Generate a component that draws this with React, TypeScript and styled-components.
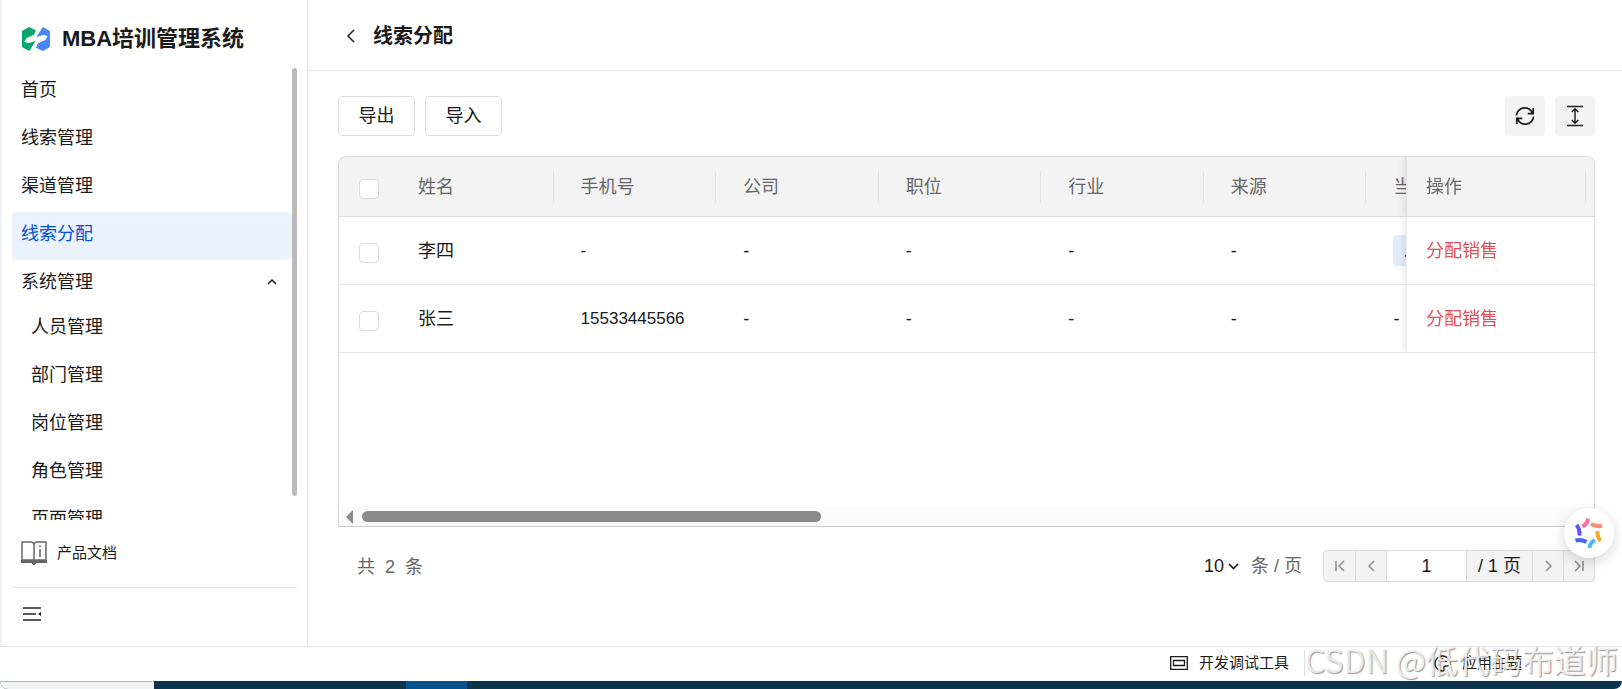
import React from "react";
import styled, { createGlobalStyle } from "styled-components";

const GlobalStyle = createGlobalStyle`
  *, *::before, *::after { box-sizing: border-box; }
  body {
    margin: 0;
    background: #fff;
    color: #1a1a1a;
    font-family: "Liberation Sans", "Noto Sans CJK SC", sans-serif;
    font-size: 18px;
    line-height: 26px;
  }
  button, input, select { font: inherit; color: inherit; }
  a { color: inherit; text-decoration: none; }
`;

const Page = styled.div`
  display: flex;
  flex-direction: column;
  height: 100vh;
  min-height: 560px;
  overflow: hidden;
`;

const Workspace = styled.div`
  flex: 1;
  min-height: 0;
  display: flex;
  border-left: 2px solid #f0f0f8;
`;

const Sidebar = styled.aside`
  flex: none;
  width: 306px;
  padding: 0 10px;
  display: flex;
  flex-direction: column;
  border-right: 1px solid #e3e3e6;
`;

const Brand = styled.div`
  flex: none;
  height: 68px;
  padding: 10px 10px 0;
  display: flex;
  align-items: center;
  gap: 12px;
`;

const BrandName = styled.h1`
  margin: 0;
  font-size: 22px;
  line-height: 32px;
  font-weight: 700;
  white-space: nowrap;
`;

const MenuScroll = styled.div`
  flex: 1;
  min-height: 0;
  display: flex;
  align-items: flex-start;
  overflow: hidden;
`;

const Menu = styled.nav`
  flex: 1;
  min-width: 0;
`;

const MenuLink = styled.a<{ $active?: boolean; $nested?: boolean }>`
  display: block;
  height: 48px;
  padding: 9px 10px 13px ${(p) => (p.$nested ? "19px" : "9px")};
  border-radius: 4px;
  background: ${(p) => (p.$active ? "#ebf2ff" : "transparent")};
  color: ${(p) => (p.$active ? "#0052d9" : "#1a1a1a")};
`;

const GroupButton = styled.button`
  display: flex;
  align-items: center;
  justify-content: space-between;
  width: 100%;
  height: 45px;
  padding: 0 15px 2px 9px;
  border: 0;
  background: none;
`;

const MenuThumb = styled.div`
  flex: none;
  width: 5px;
  height: 428px;
  border-radius: 3px;
  background: #bbb;
`;

const DocsLink = styled.a`
  flex: none;
  display: flex;
  align-items: center;
  gap: 10px;
  height: 68px;
  padding: 0 0 2px 9px;
  font-size: 15px;
  border-bottom: 1px solid #e5e5e5;
`;

const CollapseButton = styled.button`
  flex: none;
  display: flex;
  align-items: center;
  height: 58px;
  padding: 0 10px 6px 11px;
  border: 0;
  background: none;
`;

const Main = styled.main`
  flex: 1;
  min-width: 0;
  display: flex;
  flex-direction: column;
`;

const TopBar = styled.header`
  flex: none;
  display: flex;
  align-items: center;
  gap: 18px;
  height: 71px;
  padding: 2px 0 0 38px;
  border-bottom: 1px solid #e5e5e5;
`;

const BackButton = styled.button`
  display: flex;
  padding: 0;
  border: 0;
  background: none;
`;

const PageTitle = styled.h2`
  margin: 0;
  font-size: 20px;
  line-height: 28px;
  font-weight: 700;
`;

const Content = styled.section`
  flex: 1;
  min-height: 0;
  display: flex;
  flex-direction: column;
  padding: 25px 27px 41px 30px;
`;

const Toolbar = styled.div`
  display: flex;
  gap: 10px;
  height: 40px;
  margin-bottom: 20px;
`;

const OutlineButton = styled.button`
  width: 77px;
  height: 40px;
  padding: 0;
  border: 1px solid #ddd;
  border-radius: 4px;
  background: #fff;
`;

const Spacer = styled.div`
  flex: 1;
`;

const IconButton = styled.button`
  display: flex;
  align-items: center;
  justify-content: center;
  width: 40px;
  height: 40px;
  padding: 0;
  border: 0;
  border-radius: 4px;
  background: #f3f3f3;
`;

const TableFrame = styled.div`
  flex: 1;
  min-height: 0;
  display: flex;
  flex-direction: column;
  border: 1px solid #dcdcdc;
  border-bottom-color: #ccc;
  border-radius: 8px 8px 0 0;
  overflow: hidden;
`;

const TableViewport = styled.div`
  flex: 1;
  min-height: 0;
  overflow: hidden;
`;

const Table = styled.table`
  table-layout: fixed;
  width: 1386px;
  min-width: 100%;
  border-collapse: separate;
  border-spacing: 0;
`;

const CheckCol = styled.col`
  width: 60px;
`;

const ActionCol = styled.col`
  width: 188px;
`;

const HeadCell = styled.th`
  height: 60px;
  padding: 0 8px 0 19px;
  background: #f3f3f3;
  border-bottom: 1px solid #dcdcdc;
  color: #666;
  font-weight: 400;
  text-align: left;
`;

const HeadLabel = styled.div`
  height: 32px;
  line-height: 32px;
  border-right: 1px solid #e4e4e4;
  white-space: nowrap;
`;

const Cell = styled.td`
  height: 68px;
  padding: 0 8px 0 19px;
  background: #fff;
  border-bottom: 1px solid #e7e7e7;
  white-space: nowrap;
`;

const pinned = `
  position: sticky;
  right: 0;
  border-left: 1px solid #eee;
  box-shadow: -3px 0 6px rgba(0, 0, 0, 0.08);
  clip-path: inset(0 0 0 -10px);
`;

const PinnedHead = styled(HeadCell)`
  ${pinned}
  border-left-color: #e2e2e2;
`;

const PinnedCell = styled(Cell)`
  ${pinned}
`;

const Phone = styled.span`
  font-size: 17px;
`;

const Checkbox = styled.input`
  appearance: none;
  display: block;
  width: 20px;
  height: 20px;
  margin: 4px 0 0 1px;
  border: 1px solid #dcdcdc;
  border-radius: 4px;
  background: #fff;
`;

const OwnerTag = styled.span`
  display: inline-block;
  height: 31px;
  padding: 0 10px;
  border-radius: 4px;
  background: #e3ecfb;
  color: #4b3fd0;
  line-height: 30px;
  vertical-align: middle;
`;

const ActionButton = styled.button`
  padding: 0;
  border: 0;
  background: none;
  color: #e34d59;
`;

const ScrollTrack = styled.div`
  flex: none;
  display: flex;
  align-items: center;
  height: 19px;
  padding: 0 7px;
  background: #fbfbfb;
`;

const ScrollThumb = styled.div`
  flex: 3;
  height: 11px;
  margin-left: 9px;
  border-radius: 6px;
  background: #8b8b8b;
`;

const ScrollRest = styled.div`
  flex: 5;
`;

const Pager = styled.div`
  flex: none;
  display: flex;
  align-items: center;
  height: 78px;
  padding-left: 19px;
  border-radius: 0 0 3px 3px;
  box-shadow: 0 0 2px rgba(0, 0, 0, 0.04);
  color: #666;
`;

const Total = styled.div`
  display: flex;
  gap: 10px;
  padding-top: 2px;
`;

const SizePicker = styled.label`
  display: flex;
  align-items: center;
  gap: 12px;
  margin-right: 21px;
  white-space: nowrap;
`;

const SelectBox = styled.span`
  display: flex;
  align-items: center;
  gap: 4px;
  color: #1a1a1a;
`;

const SizeSelect = styled.select`
  appearance: none;
  width: 20px;
  padding: 0;
  border: 0;
  background: none;
`;

const PageGroup = styled.div`
  display: flex;
  height: 32px;
  border: 1px solid #dcdcdc;
  border-radius: 4px;
  background: #f3f3f3;
  color: #1a1a1a;
  overflow: hidden;
`;

const StepButton = styled.button<{ $first?: boolean }>`
  display: flex;
  align-items: center;
  justify-content: center;
  width: 31px;
  padding: 0;
  border: 0;
  border-left: ${(p) => (p.$first ? "0" : "1px solid #dcdcdc")};
  background: none;
  color: #8b8b8b;
`;

const PageInput = styled.input`
  width: 80px;
  padding: 0;
  border: 0;
  border-left: 1px solid #dcdcdc;
  background: #fff;
  text-align: center;
`;

const PageCount = styled.span`
  width: 66px;
  border-left: 1px solid #dcdcdc;
  line-height: 30px;
  text-align: center;
`;

const FloatButton = styled.button`
  position: fixed;
  right: 8px;
  bottom: 131px;
  display: flex;
  align-items: center;
  justify-content: center;
  width: 50px;
  height: 50px;
  padding: 0;
  border: 0;
  border-radius: 50%;
  background: #fff;
  box-shadow: 0 4px 14px rgba(0, 0, 0, 0.16);
`;

const StatusBar = styled.footer`
  flex: none;
  position: relative;
  display: flex;
  justify-content: flex-end;
  align-items: center;
  height: 35px;
  padding: 0 100px 2px 0;
  border-top: 1px solid #e3e3ea;
`;

const StatusButton = styled.button`
  display: flex;
  align-items: center;
  gap: 11px;
  padding: 0;
  border: 0;
  background: none;
  font-size: 15px;
`;

const StatusDivider = styled.div`
  width: 1px;
  height: 26px;
  margin: 0 129px 0 15px;
  background: #dcdce4;
`;

const Watermark = styled.span`
  position: absolute;
  right: 4px;
  top: -8px;
  color: rgba(246, 246, 246, 0.85);
  font-family: "Noto Sans CJK SC", sans-serif;
  font-weight: 400;
  font-size: 32px;
  line-height: 40px;
  text-shadow: 1px 1px 1px rgba(0, 0, 0, 0.4);
  white-space: nowrap;
  pointer-events: none;
`;

const Taskbar = styled.div`
  flex: none;
  display: flex;
  height: 8px;
  background: #0e344d;
  border-radius: 0 0 10px 10px;
  overflow: hidden;
`;

const TaskSearch = styled.div`
  width: 154px;
  background: #f2f3f5;
  border-top: 1px solid #b8b8b8;
`;

const TaskActive = styled.div`
  width: 61px;
  margin-left: 252px;
  background: #05528f;
`;

type StrokeProps = { d: string; w: number; h: number; stroke?: number };
const Stroke = ({ d, w, h, stroke = 1.5 }: StrokeProps) => (
  <svg width={w} height={h} viewBox={`0 0 ${w} ${h}`} fill="none" stroke="currentColor" strokeWidth={stroke} aria-hidden="true">
    <path d={d} />
  </svg>
);

const Logo = () => (
  <svg width="28" height="24" viewBox="0 0 84 72" aria-hidden="true">
    <path d="M0 12 21 0 42 10 36 23 14 33 7 44 19 49 41 41 22 72 0 60z" fill="#07a86c" />
    <path d="M84 60 63 72 42 62 48 49 70 39 77 28 65 23 43 31 62 0 84 12z" fill="#4a87f2" />
  </svg>
);

const BookIcon = () => (
  <svg width="26" height="26" viewBox="0 0 26 26" fill="none" stroke="#666" strokeWidth="1.5" aria-hidden="true">
    <path d="M1 2h8c2 0 4 1 4 3v15H1zM25 2h-8c-2 0-4 1-4 3v15h12z" />
    <path d="M0 21.500h26" strokeWidth="3" />
    <path d="M10.500 23h5l-2.500 2.500z" fill="#666" stroke="none" />
    <path d="M19 9v8M19 5.500v1.800" />
  </svg>
);

const CollapseIcon = () => (
  <svg width="18" height="16" viewBox="0 0 18 16" fill="none" stroke="#222" strokeWidth="1.600" aria-hidden="true">
    <path d="M0 2h18M0 8h13M0 14h18" />
    <path d="M18 6v4L15 8z" fill="#222" stroke="none" />
  </svg>
);

const RefreshIcon = () => (
  <svg width="20" height="20" viewBox="0 0 20 20" fill="none" stroke="#1a1a1a" strokeWidth="1.700" aria-hidden="true">
    <path d="M1.500 9.500a8.200 8.200 0 0 1 16-2M18.200 2v5.700h-5.500M18.500 10.500a8.200 8.200 0 0 1-16 2M1.800 18v-5.700h5.500" />
  </svg>
);

const HeightIcon = () => (
  <svg width="16" height="22" viewBox="0 0 16 22" fill="none" stroke="#1a1a1a" strokeWidth="1.400" aria-hidden="true">
    <path d="M0 1.500h16M0 20.500h16M8 4v14M4.700 7 8 3.700 11.300 7M4.700 15 8 18.300l3.300-3.300" />
  </svg>
);

const DevIcon = () => (
  <svg width="18" height="14" viewBox="0 0 18 14" fill="none" stroke="#1a1a1a" strokeWidth="1.300" aria-hidden="true">
    <path d="M.700.700h16.600v12.600H.700zM3.500 4.500h11v5h-11z" />
  </svg>
);

const PaletteIcon = () => (
  <svg width="17" height="17" viewBox="0 0 17 17" fill="none" stroke="#1a1a1a" strokeWidth="1.300" aria-hidden="true">
    <path d="M8.500 16A7.500 7.500 0 1 1 16 8.500c0 2.500-2 2.500-4 2.500s-2.500 1-2 2.500 0 2.500-1.500 2.500z" />
    <g fill="#1a1a1a" stroke="none">
      <circle cx="5" cy="10" r="1.200" />
      <circle cx="5" cy="6" r="1.200" />
      <circle cx="8.500" cy="4.200" r="1.200" />
      <circle cx="12" cy="6" r="1.200" />
    </g>
  </svg>
);

const SparkIcon = () => (
  <svg width="30" height="32" viewBox="0 0 30 32" fill="none" strokeWidth="4" aria-hidden="true">
    <path d="M8.500 9.500q5-2.500 5.500-8" stroke="#ff6b9d" />
    <path d="M17 7q5 3 11 1.800" stroke="#ff8a70" />
    <path d="M23.500 14q-.5 6 3 10" stroke="#f7a823" />
    <path d="M21 23q-5 2.500-5.500 8" stroke="#4db5ff" />
    <path d="M1.500 23.500q6-1.500 11 1.500" stroke="#4263ff" />
    <path d="M2.500 8q3.500 4 3 10.500" stroke="#5a52ff" />
  </svg>
);

const topMenu = ["首页", "线索管理", "渠道管理", "线索分配"];
const systemMenu = ["人员管理", "部门管理", "岗位管理", "角色管理", "页面管理"];
const columns = ["姓名", "手机号", "公司", "职位", "行业", "来源", "当前负责人"];
const rows = [
  { name: "李四", phone: "-", owner: "人员" },
  { name: "张三", phone: "15533445566", owner: "" },
];

export default function App() {
  return (
    <>
      <GlobalStyle />
      <Page>
        <Workspace>
          <Sidebar>
            <Brand>
              <Logo />
              <BrandName>MBA培训管理系统</BrandName>
            </Brand>
            <MenuScroll>
              <Menu>
                {topMenu.map((item) => (
                  <MenuLink key={item} href="#" $active={item === "线索分配"}>{item}</MenuLink>
                ))}
                <GroupButton aria-expanded="true">
                  系统管理
                  <Stroke d="M1 6l4-4 4 4" w={10} h={8} />
                </GroupButton>
                {systemMenu.map((item) => (
                  <MenuLink key={item} href="#" $nested>{item}</MenuLink>
                ))}
              </Menu>
              <MenuThumb />
            </MenuScroll>
            <DocsLink href="#">
              <BookIcon />
              产品文档
            </DocsLink>
            <CollapseButton aria-label="收起菜单">
              <CollapseIcon />
            </CollapseButton>
          </Sidebar>
          <Main>
            <TopBar>
              <BackButton aria-label="返回">
                <Stroke d="M8 1 2 7l6 6" w={9} h={14} />
              </BackButton>
              <PageTitle>线索分配</PageTitle>
            </TopBar>
            <Content>
              <Toolbar>
                <OutlineButton>导出</OutlineButton>
                <OutlineButton>导入</OutlineButton>
                <Spacer />
                <IconButton aria-label="刷新"><RefreshIcon /></IconButton>
                <IconButton aria-label="行高"><HeightIcon /></IconButton>
              </Toolbar>
              <TableFrame>
                <TableViewport>
                  <Table>
                    <colgroup>
                      <CheckCol />
                      {columns.map((c) => <col key={c} />)}
                      <ActionCol />
                    </colgroup>
                    <thead>
                      <tr>
                        <HeadCell><Checkbox type="checkbox" aria-label="全选" /></HeadCell>
                        {columns.map((c) => (
                          <HeadCell key={c}><HeadLabel>{c}</HeadLabel></HeadCell>
                        ))}
                        <PinnedHead><HeadLabel>操作</HeadLabel></PinnedHead>
                      </tr>
                    </thead>
                    <tbody>
                      {rows.map((r) => (
                        <tr key={r.name}>
                          <Cell><Checkbox type="checkbox" aria-label={r.name} /></Cell>
                          <Cell>{r.name}</Cell>
                          <Cell><Phone>{r.phone}</Phone></Cell>
                          <Cell>-</Cell>
                          <Cell>-</Cell>
                          <Cell>-</Cell>
                          <Cell>-</Cell>
                          <Cell>{r.owner ? <OwnerTag>{r.owner}</OwnerTag> : "-"}</Cell>
                          <PinnedCell><ActionButton>分配销售</ActionButton></PinnedCell>
                        </tr>
                      ))}
                    </tbody>
                  </Table>
                </TableViewport>
                <ScrollTrack>
                  <svg width="7" height="14" viewBox="0 0 7 14" aria-hidden="true">
                    <path d="M7 0v14L0 7z" fill="#8b8b8b" />
                  </svg>
                  <ScrollThumb />
                  <ScrollRest />
                </ScrollTrack>
              </TableFrame>
              <Pager>
                <Total><span>共</span><span>2</span><span>条</span></Total>
                <Spacer />
                <SizePicker>
                  <SelectBox>
                    <SizeSelect defaultValue="10" aria-label="每页条数">
                      <option>10</option>
                    </SizeSelect>
                    <Stroke d="M1 2l4.500 4.500L10 2" w={11} h={8} stroke={1.7} />
                  </SelectBox>
                  <span>条 / 页</span>
                </SizePicker>
                <PageGroup>
                  <StepButton $first aria-label="第一页"><Stroke d="M1 1v10M9 1 4 6l5 5" w={10} h={12} /></StepButton>
                  <StepButton aria-label="上一页"><Stroke d="M6 1 1 6l5 5" w={7} h={12} /></StepButton>
                  <PageInput defaultValue="1" aria-label="页码" />
                  <PageCount>/ 1 页</PageCount>
                  <StepButton aria-label="下一页"><Stroke d="M1 1l5 5-5 5" w={7} h={12} /></StepButton>
                  <StepButton aria-label="最后一页"><Stroke d="M1 1l5 5-5 5M9 1v10" w={10} h={12} /></StepButton>
                </PageGroup>
              </Pager>
            </Content>
          </Main>
        </Workspace>
        <StatusBar>
          <StatusButton><DevIcon />开发调试工具</StatusButton>
          <StatusDivider />
          <StatusButton><PaletteIcon />应用主题</StatusButton>
          <Watermark>CSDN @低代码布道师</Watermark>
        </StatusBar>
        <Taskbar>
          <TaskSearch />
          <TaskActive />
        </Taskbar>
        <FloatButton aria-label="智能助手"><SparkIcon /></FloatButton>
      </Page>
    </>
  );
}
